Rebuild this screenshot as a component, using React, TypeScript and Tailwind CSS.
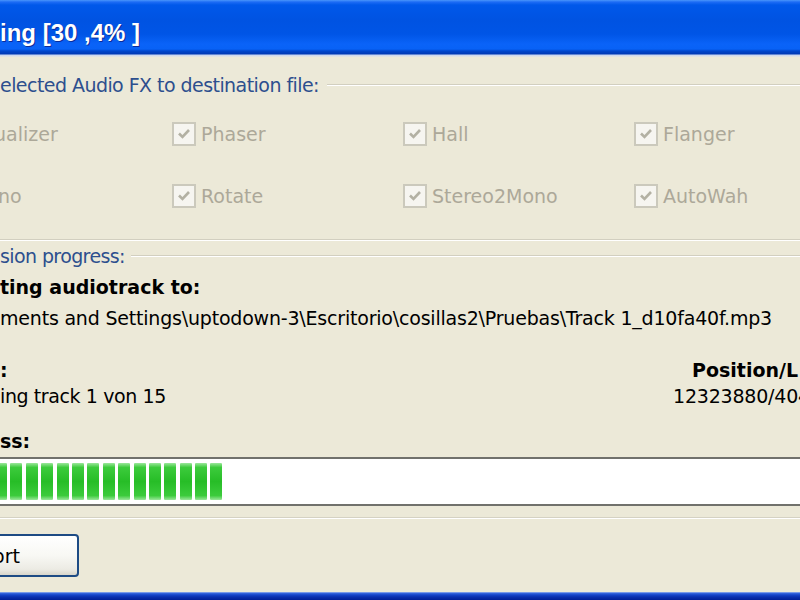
import React from "react";

function Check({ label }: { label: string }) {
  return (
    <div className="flex items-center gap-[5px] h-[24px]">
      <div className="w-[24px] h-[24px] shrink-0 border-2 border-[#cbc9bc] bg-[#f6f5f0] flex items-center justify-center">
        <svg width="16" height="16" viewBox="0 0 16 16">
          <path d="M3 7.5 L6.5 11 L13 4" fill="none" stroke="#b3b1a3" strokeWidth="2.6" />
        </svg>
      </div>
      <span className="text-[#aca899] whitespace-nowrap">{label}</span>
    </div>
  );
}

export default function App() {
  const blocks = Array.from({ length: 15 });
  return (
    <div className="w-[800px] h-[600px] overflow-hidden bg-[#ece9d8] flex flex-col font-['DejaVu_Sans',sans-serif] text-[19px] text-black">
      {/* Title bar */}
      <div className="h-[57px] shrink-0 bg-[linear-gradient(to_bottom,#4a96fb_0px,#1d6cf5_2px,#0058ea_5px,#0053e2_20px,#0055e6_34px,#0a63f8_44px,#0862f6_49px,#0046cc_51px,#0038b4_54px,#c7d5f3_55px,#e6e5e0_57px)]">
        <div className="mt-[21px] leading-[24px] text-[24px] font-bold text-white whitespace-nowrap font-['Liberation_Sans',sans-serif] [text-shadow:1px_1px_0_#0b2c9a]">
          ing [30 ,4% ]
        </div>
      </div>

      {/* Group 1 header */}
      <div className="mt-[14px] h-[28px] flex items-center">
        <span className="leading-[28px] text-[#2d4f8e] whitespace-nowrap tracking-[-0.55px]">elected Audio FX to destination file:</span>
        <div className="flex-1 ml-[8px] border-t border-[#d2cfc0] border-b border-b-white" />
      </div>

      {/* Checkbox rows */}
      <div className="-ml-[59px] mt-[23px] grid grid-cols-[231px_231px_231px_231px]">
        <Check label="Equalizer" />
        <Check label="Phaser" />
        <Check label="Hall" />
        <Check label="Flanger" />
      </div>
      <div className="-ml-[59px] mt-[38px] grid grid-cols-[231px_231px_231px_231px]">
        <Check label="Mono" />
        <Check label="Rotate" />
        <Check label="Stereo2Mono" />
        <Check label="AutoWah" />
      </div>

      {/* Group 1 bottom */}
      <div className="mt-[31px] border-t border-[#d2cfc0] border-b border-b-white" />

      {/* Group 2 header */}
      <div className="mt-[2px] h-[26px] flex items-center">
        <span className="leading-[26px] text-[#2d4f8e] whitespace-nowrap tracking-[-0.6px]">sion progress:</span>
        <div className="flex-1 ml-[6px] border-t border-[#d2cfc0] border-b border-b-white" />
      </div>

      <div className="mt-[5px] leading-[26px] font-bold whitespace-nowrap">ting audiotrack to:</div>
      <div className="mt-[5px] leading-[26px] whitespace-nowrap tracking-[-0.2px]">
        ments and Settings\uptodown-3\Escritorio\cosillas2\Pruebas\Track 1_d10fa40f.mp3
      </div>

      <div className="mt-[26px] flex leading-[26px] whitespace-nowrap">
        <div className="w-[673px] shrink-0 font-bold">:</div>
        <div className="pl-[19px] shrink-0 font-bold">Position/L</div>
      </div>
      <div className="flex leading-[26px] whitespace-nowrap">
        <div className="w-[673px] shrink-0 tracking-[-0.4px]">ing track 1 von 15</div>
        <div className="shrink-0 tracking-[-0.2px]">12323880/404</div>
      </div>

      <div className="mt-[19px] leading-[26px] font-bold whitespace-nowrap">ss:</div>

      {/* Progress bar */}
      <div className="mt-[3px] h-[49px] shrink-0 border-t-2 border-b-2 border-[#71716c] bg-white py-[4px] overflow-hidden">
        <div className="flex gap-[3.4px] -ml-[5px] h-full">
          {blocks.map((_, i) => (
            <div
              key={i}
              className="w-[12px] h-full shrink-0 rounded-[1px] bg-[linear-gradient(to_bottom,#9be79b_0%,#3ccb3c_12%,#27bd27_50%,#3ccb3c_88%,#9be79b_100%)]"
            />
          ))}
        </div>
      </div>

      <div className="mt-[11px] border-t border-[#d5d2c3] border-b border-b-white" />

      {/* Button */}
      <div className="mt-[15px] -ml-[61px] w-[140px] h-[43px] shrink-0 rounded-[4px] border-2 border-[#1d4b84] bg-[linear-gradient(to_bottom,#ffffff_0%,#f8f8f4_50%,#ecebe4_85%,#d8d6cb_100%)] flex items-center justify-end pr-[57px]">
        <span className="leading-[26px] whitespace-nowrap">Abort</span>
      </div>

      <div className="flex-1" />
      <div className="h-[8px] shrink-0 bg-[linear-gradient(to_bottom,#b5c8ef_0px,#3b6ae0_1px,#1443c8_3px,#0a2fae_5px,#001e96_8px)]" />
    </div>
  );
}
